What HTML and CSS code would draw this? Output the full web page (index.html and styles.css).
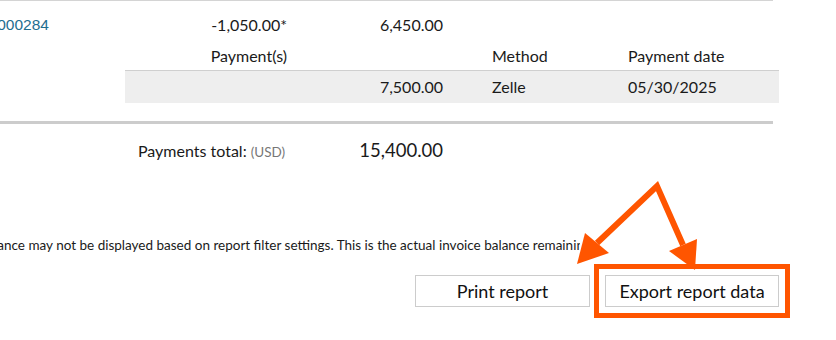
FILE: index.html
```html
<!DOCTYPE html>
<html>
  <head>
    <title>Payments report</title>
    <link rel="stylesheet" href="styles.css">
  </head>
  <body>

    <div class="report">
      <div class="rule"></div>

      <div class="grid inv-row">
        <a class="inv-link" href="#">INV-000284</a>
        <span class="num">-1,050.00*</span>
        <span class="num">6,450.00</span>
      </div>

      <div class="grid pay-head">
        <span></span>
        <span class="num">Payment(s)</span>
        <span></span>
        <span></span>
        <span>Method</span>
        <span>Payment date</span>
      </div>

      <div class="grid pay-row">
        <span class="shade"></span>
        <span class="shade num">7,500.00</span>
        <span class="shade"></span>
        <span class="shade">Zelle</span>
        <span class="shade">05/30/2025</span>
      </div>

      <div class="rule thick"></div>

      <div class="totals">
        <span class="totals-label">Payments total: <small>(USD)</small></span>
        <span class="totals-value">15,400.00</span>
      </div>

      <p class="notice">*Balance may not be displayed based on report filter settings. This is the actual invoice balance remaining.</p>

      <div class="actions">
        <button class="btn">Print report</button>
        <button class="btn btn-marked">Export report data</button>
      </div>
    </div>

    <!-- annotation arrows -->
    <svg class="callout" width="836" height="340" viewBox="0 0 836 340">
      <polyline points="597,243 657,186 683,245" fill="none" stroke="#ff5500" stroke-width="6" stroke-linejoin="miter"/>
      <polygon points="585,233 577,264 609,253" fill="#ff5500"/>
      <polygon points="669,251 697,239 695,270" fill="#ff5500"/>
    </svg>

  </body>
</html>
```

FILE: styles.css
```css
body {
  margin: 0;
  font-family: "Lato", "Open Sans", sans-serif;
  color: #1a1a1a;
  background: white;
}

.report {
  width: 836px;
  height: 340px;
  overflow: hidden;
}

.rule {
  width: 773px;
  height: 1px;
  background-color: #d4d4d4;
}

.rule.thick {
  height: 3px;
  margin-top: 18px;
  background-color: #cccccc;
}

.grid {
  display: grid;
  grid-template-columns: 125px 162px 156px 49px 136px 151px;
  font-size: 16px;
  line-height: 20px;
}

.num {
  text-align: right;
}

.inv-row {
  padding: 14px 0 8px;
}

.inv-link {
  font-family: "Liberation Sans", Arial, sans-serif;
  font-size: 15.5px;
  color: #1f6e90;
  text-decoration: none;
  white-space: nowrap;
  overflow: hidden;
  text-indent: -33px;
}

.pay-head {
  padding: 3px 0 4px;
}

.pay-row {
  width: 654px;
  margin-left: 125px;
  grid-template-columns: 162px 156px 49px 136px 151px;
  border-top: 1px solid #cfcfcf;
  background-color: #eeeeee;
}

.shade {
  padding: 6px 0;
}

.totals {
  display: flex;
  align-items: baseline;
  width: 443px;
  padding: 16px 0 0 138px;
  box-sizing: border-box;
  line-height: 20px;
}

.totals-label {
  font-size: 16px;
}

.totals-label small {
  font-size: 13.5px;
  color: #777;
}

.totals-value {
  margin-left: auto;
  font-size: 18.5px;
}

.notice {
  width: 580px;
  margin: 75px 0 0;
  font-size: 13.5px;
  line-height: 16px;
  white-space: nowrap;
  overflow: hidden;
  text-indent: -27px;
}

.actions {
  display: flex;
  justify-content: flex-end;
  gap: 15px;
  width: 779px;
  margin-top: 22px;
}

.btn {
  height: 32px;
  background-color: white;
  border: 1px solid #cccccc;
  font-family: "Lato", sans-serif;
  font-size: 18px;
  color: #111;
  padding: 0;
}

.btn:first-child {
  width: 175px;
}

.btn-marked {
  width: 174px;
  outline: 5px solid #ff5500;
  outline-offset: 6px;
}

.callout {
  position: absolute;
  top: 0;
  left: 0;
  pointer-events: none;
}
```
